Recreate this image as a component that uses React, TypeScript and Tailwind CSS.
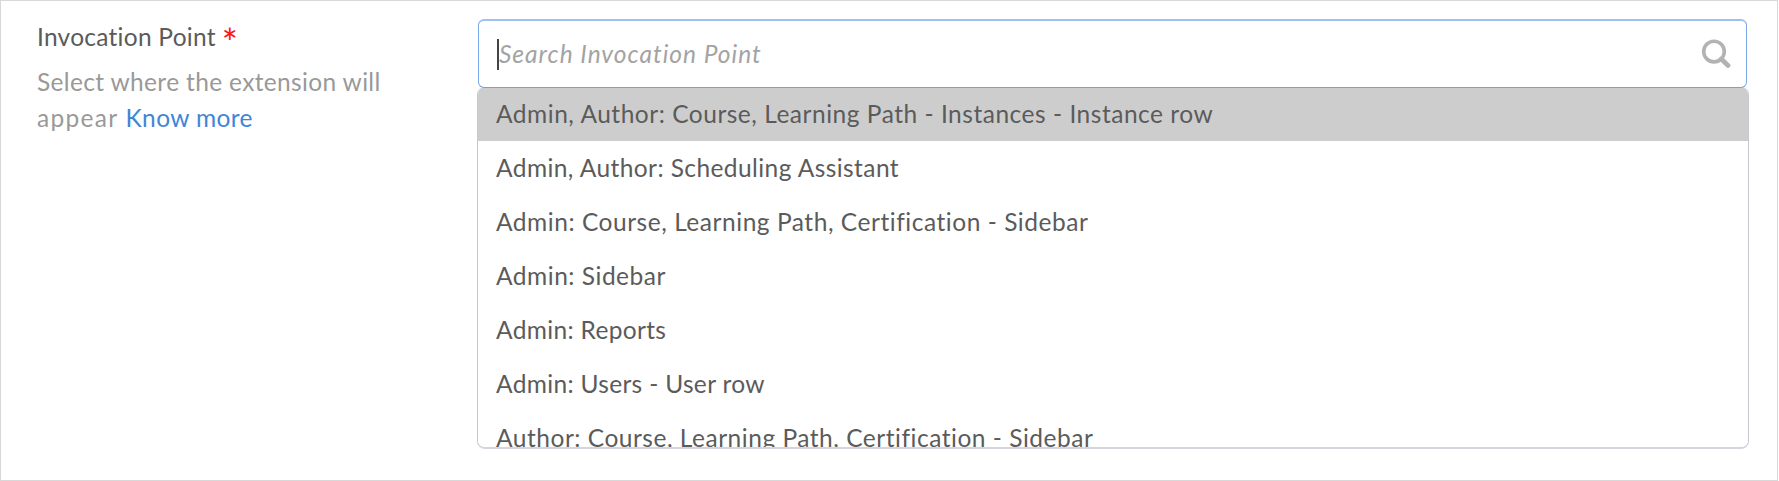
import React from "react";

const options = [
  { label: "Admin, Author: Course, Learning Path - Instances - Instance row", tracking: "tracking-[0.52px]" },
  { label: "Admin, Author: Scheduling Assistant", tracking: "tracking-[0.42px]" },
  { label: "Admin: Course, Learning Path, Certification - Sidebar", tracking: "tracking-[0.54px]" },
  { label: "Admin: Sidebar", tracking: "tracking-[0.52px]" },
  { label: "Admin: Reports", tracking: "tracking-[0.34px]" },
  { label: "Admin: Users - User row", tracking: "tracking-[0.33px]" },
  { label: "Author: Course, Learning Path, Certification - Sidebar", tracking: "tracking-[0.52px]" },
];

function SearchIcon() {
  return (
    <svg width="30" height="30" viewBox="0 0 30 30" fill="none" stroke="#b3b3b3" aria-hidden="true">
      <circle cx="13" cy="12.6" r="10.3" strokeWidth="3.6" />
      <path d="M20.3 20L27 26.4" strokeWidth="4.8" strokeLinecap="round" />
    </svg>
  );
}

export default function App() {
  return (
    <div className="flex h-[481px] w-[1778px] border border-[#d8d8d8] bg-white font-['Lato',sans-serif] text-[24.5px] text-[#5b5b5b]">
      <div className="w-[476px] shrink-0 pl-9 pt-[18px]">
        <div className="flex h-9 items-center whitespace-nowrap leading-9">
          <span className="tracking-[0.26px]">Invocation Point</span>
          <span className="ml-1.5 h-9 pt-[5px] text-[38px] leading-9 text-[#fa1414]">*</span>
        </div>
        <div className="mt-[9px] whitespace-nowrap leading-9 text-[#999999]">
          <div className="tracking-[0.34px]">Select where the extension will</div>
          <div>
            <span className="tracking-[1.3px]">appear </span>
            <a className="tracking-[0.35px] text-[#4285d6]">Know more</a>
          </div>
        </div>
      </div>
      <div className="w-[1272px] pt-[18px]">
        <div className="relative z-10 ml-px flex h-[69px] w-[1269px] items-center rounded-md border border-t-2 border-[#7aa7e6] border-t-[#a0c0ee] border-b-[#7f9fd0] bg-white pl-[18px] pr-[15px]">
          <span className="h-[31px] w-0.5 bg-[#444444]" />
          <span className="whitespace-nowrap italic tracking-[0.99px] text-[#a3a3a3]">Search Invocation Point</span>
          <span className="ml-auto"><SearchIcon /></span>
        </div>
        <ul className="-mt-px h-[362px] overflow-hidden rounded-lg border-x border-b-2 border-x-[#c8c7d0] border-b-[#d6d5dd] bg-white">
          {options.map((option, index) => (
            <li
              key={option.label}
              className={`flex h-[54px] items-center whitespace-nowrap pl-[18px] ${index === 0 ? "bg-[#cdcdcd]" : "bg-white"}`}
            >
              <span className={option.tracking}>{option.label}</span>
            </li>
          ))}
        </ul>
      </div>
    </div>
  );
}
